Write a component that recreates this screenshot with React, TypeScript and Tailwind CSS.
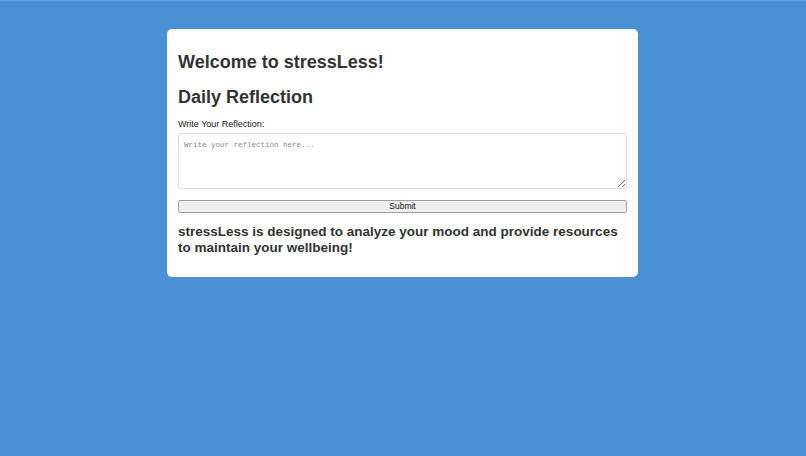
import React, { useState } from 'react';

export default function App() {
  const [text, setText] = useState('');

  return (
    <div
      className="min-h-[456px] bg-[#4a90d4] border-t border-[#6aa6de] pt-[28px]"
      style={{ fontFamily: '"Liberation Sans", Arial, sans-serif' }}
    >
      <div className="ml-[167px] w-[471px] bg-white rounded-[5px] px-[11px] pt-[22px] pb-[21px] text-[#333333]">
        <h2 className="text-[18px] leading-[22px] font-bold">Welcome to stressLess!</h2>
        <h2 className="mt-[13px] text-[18px] leading-[22px] font-bold">Daily Reflection</h2>

        <form
          className="mt-[11px] flex flex-col"
          onSubmit={(e) => {
            e.preventDefault();
          }}
        >
          <label className="text-[9px] leading-[11px] text-[#222222]">Write Your Reflection:</label>
          <textarea
            value={text}
            onChange={(e) => setText(e.target.value)}
            placeholder="Write your reflection here..."
            className="mt-[3px] h-[56px] w-full border border-[#dddddd] rounded-[3px] px-[5px] py-[6px] text-[7.5px] leading-[10px] placeholder:text-[#8a8a8a] outline-none"
            style={{ fontFamily: '"Liberation Mono", "Courier New", monospace' }}
          />
          <button
            type="submit"
            className="mt-[11px] h-[13px] w-full bg-[#efefef] border border-[#a0a0a0] rounded-[2px] text-[8.5px] leading-[11px] font-normal text-[#111111]"
          >
            Submit
          </button>
        </form>

        <p className="mt-[11px] text-[13.5px] leading-[16px] font-bold">
          stressLess is designed to analyze your mood and provide resources to maintain your wellbeing!
        </p>
      </div>
    </div>
  );
}
